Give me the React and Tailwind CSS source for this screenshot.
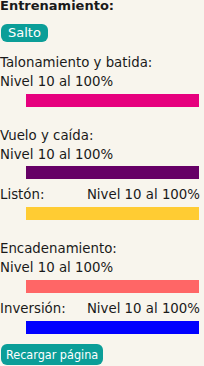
import React from 'react';

const Bar = ({ color, mt = 'mt-[3px]' }) => (
  <div className={`${mt} ml-[26px] mr-[5px] h-[13px] ${color}`}></div>
);

const Skill = ({ name, color, inline, mt, barMt }) =>
  inline ? (
    <div className={mt}>
      <div className="flex justify-between pr-[4px] leading-[19px]">
        <span>{name}</span>
        <span>Nivel 10 al 100%</span>
      </div>
      <Bar color={color} mt={barMt} />
    </div>
  ) : (
    <div className={mt}>
      <div className="leading-[19px]">{name}</div>
      <div className="leading-[19px]">Nivel 10 al 100%</div>
      <Bar color={color} mt={barMt} />
    </div>
  );

export default function App() {
  return (
    <div className="w-[204px] h-[366px] overflow-hidden bg-[#f8f5ed] text-[13.33px] text-[#1a1a1a] font-['DejaVu_Sans',sans-serif]">
      <div className="-mt-[4px] flex flex-col items-start">
        <div className="font-bold text-[13px] leading-[19px]">Entrenamiento:</div>
        <button className="mt-[9px] ml-[1px] h-[18px] px-[7px] rounded-[6px] bg-[#0b9e98] text-white text-[13px] leading-[18px] font-['DejaVu_Sans',sans-serif]">
          Salto
        </button>
        <div className="w-full">
          <Skill name="Talonamiento y batida:" color="bg-[#e6007e]" mt="mt-[11px]" />
          <Skill name="Vuelo y caída:" color="bg-[#660066]" mt="mt-[19px]" barMt="mt-[2px]" />
          <Skill name="Listón:" color="bg-[#ffcc33]" inline mt="mt-[6px]" />
          <Skill name="Encadenamiento:" color="bg-[#ff6666]" mt="mt-[19px]" />
          <Skill name="Inversión:" color="bg-[#0000ff]" inline mt="mt-[6px]" />
        </div>
        <button className="mt-[10px] ml-[1px] h-[21px] px-[5px] rounded-[6px] bg-[#0b9e98] text-white text-[12.5px] leading-[21px] font-['DejaVu_Sans_Condensed','DejaVu_Sans',sans-serif]">
          Recargar página
        </button>
      </div>
    </div>
  );
}
